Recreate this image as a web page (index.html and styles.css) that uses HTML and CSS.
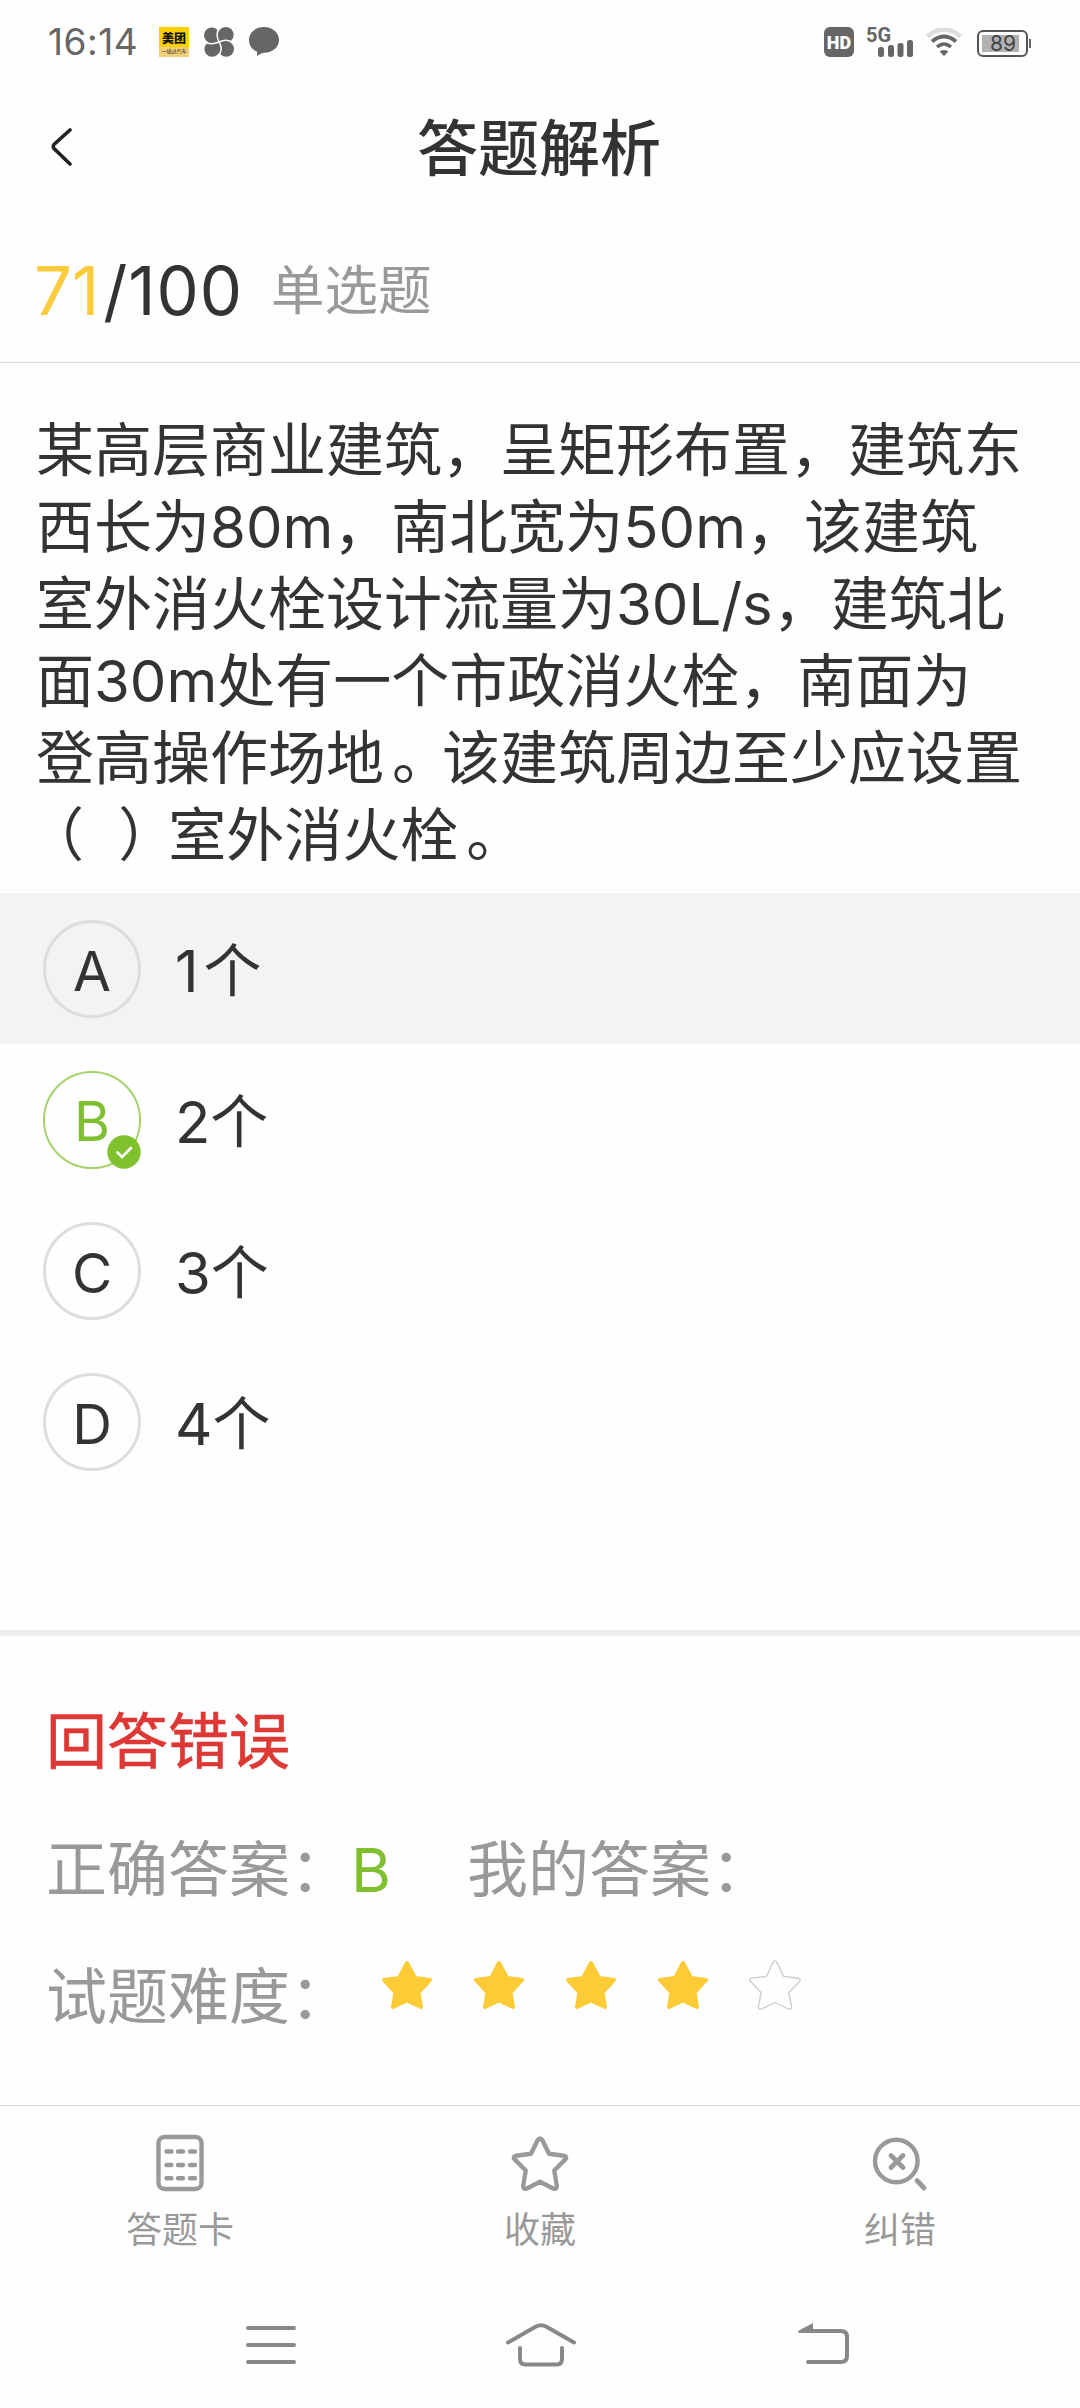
FILE: index.html
```html
<!DOCTYPE html>
<html lang="zh-CN">
<head>
    <meta charset="UTF-8">
    <meta name="viewport" content="width=device-width, initial-scale=1.0">
    <title>答题解析</title>
    <link rel="stylesheet" href="styles.css">
</head>
<body>
    <!-- 状态栏 -->
    <div class="status-bar">
        <span class="time">16:14</span>
        <div class="app-logo">
            <span class="app-name">美团</span>
            <span class="app-sub">一块过汽车</span>
        </div>
        <svg class="fan" width="30" height="30" viewBox="0 0 30 30">
            <g fill="#666">
                <circle cx="7.800" cy="8.200" r="7.800"/>
                <circle cx="21.800" cy="7.800" r="7.800"/>
                <circle cx="8.200" cy="22" r="7.800"/>
                <circle cx="22.200" cy="22" r="7.800"/>
                <circle cx="15" cy="15" r="5"/>
            </g>
            <path d="M16 0C12 5 13 11 15 15C18 19 18 25 14 30M0 14.500C5 18 10 17 15 15C20 12.500 25 12.500 30 16" fill="none" stroke="#fefefe" stroke-width="1.500"/>
        </svg>
        <svg class="chat" width="30" height="30" viewBox="0 0 30 30">
            <path d="M15 0C23.500 0 30 5.600 30 13S23.500 25.600 15.500 25.800C13 26 10.500 27 8 29V24.500C3 22.500 0 18.500 0 13C0 5.600 6.500 0 15 0Z" fill="#666"/>
        </svg>
        <div class="status-right">
            <span class="hd">HD</span>
            <div class="signal">
                <span class="net">5G</span>
                <svg width="36" height="17" viewBox="0 0 36 17" fill="#666">
                    <rect x="0" y="7" width="6" height="10" rx="2.500"/>
                    <rect x="10" y="5" width="6" height="12" rx="2.500"/>
                    <rect x="19.500" y="3" width="6" height="14" rx="2.500"/>
                    <rect x="29" y="0" width="6" height="17" rx="2.500"/>
                </svg>
            </div>
            <svg class="wifi" width="36" height="28" viewBox="0 0 36 28" fill="none">
                <path d="M1.500 8.500Q18-5.500 34.500 8.500" stroke="#ddd" stroke-width="4.500"/>
                <path d="M6 13.500Q18 3.500 30 13.500" stroke="#666" stroke-width="4"/>
                <path d="M11 19Q18 13 25 19" stroke="#666" stroke-width="3.500"/>
                <path d="M18 28L13.500 23.500Q18 20.500 22.500 23.500Z" fill="#666"/>
            </svg>
            <div class="battery"><span>89</span></div>
        </div>
    </div>

    <!-- 标题 -->
    <header class="header">
        <svg class="back" width="22" height="40" viewBox="0 0 22 40">
            <path d="M19 3L3 17.500Q1.500 19.500 3 21.500L19 37" fill="none" stroke="#222" stroke-width="3.600" stroke-linecap="round"/>
        </svg>
        <h1>答题解析</h1>
    </header>

    <div class="progress">
        <span class="current">71</span><span class="total">/100</span>
        <span class="type">单选题</span>
    </div>

    <!-- 题目 -->
    <p class="question">某高层商业建筑，呈矩形布置，建筑东<br>西长为80m，南北宽为50m，该建筑<br>室外消火栓设计流量为30L/s，建筑北<br>面30m处有一个市政消火栓，南面为<br>登高操作场地<span class="stop">。</span>该建筑周边至少应设置<br><span class="paren-l">（</span> <span class="paren-r">）</span>室外消火栓<span class="stop">。</span></p>

    <!-- 选项 -->
    <ul class="options">
        <li class="option active"><span class="letter">A</span><span class="text">1个</span></li>
        <li class="option right">
            <span class="letter">B
                <svg class="tick" width="34" height="34" viewBox="0 0 34 34">
                    <circle cx="17" cy="17" r="16.700" fill="#80c22e"/>
                    <path d="M10.500 17.500L15 22L24 13" fill="none" stroke="#fff" stroke-width="2.600" stroke-linecap="round" stroke-linejoin="round"/>
                </svg>
            </span>
            <span class="text">2个</span>
        </li>
        <li class="option"><span class="letter">C</span><span class="text">3个</span></li>
        <li class="option"><span class="letter">D</span><span class="text">4个</span></li>
    </ul>

    <!-- 答案结果 -->
    <section class="result">
        <div class="row wrong">回答错误</div>
        <div class="row">
            <span>正确答案：</span><span class="answer">B</span>
            <span class="mine">我的答案：</span>
        </div>
        <div class="row">
            <span>试题难度：</span>
            <div class="stars">
                <svg class="star" viewBox="0 0 52 50"><path d="M26 3L34 18L49 20L37.500 32.500L40 47L26 40.500L12 47L14.500 32.500L3 20L18 18Z"/></svg>
                <svg class="star" viewBox="0 0 52 50"><path d="M26 3L34 18L49 20L37.500 32.500L40 47L26 40.500L12 47L14.500 32.500L3 20L18 18Z"/></svg>
                <svg class="star" viewBox="0 0 52 50"><path d="M26 3L34 18L49 20L37.500 32.500L40 47L26 40.500L12 47L14.500 32.500L3 20L18 18Z"/></svg>
                <svg class="star" viewBox="0 0 52 50"><path d="M26 3L34 18L49 20L37.500 32.500L40 47L26 40.500L12 47L14.500 32.500L3 20L18 18Z"/></svg>
                <svg class="star empty" viewBox="0 0 52 50"><path d="M24 2.600Q26 -.6 28 2.600L34.500 16.300L48.500 18Q52.600 19 50.500 21.500L39.800 32.500L42.600 46.500Q42.600 50 39.500 49L26 42.500L12.500 49Q9.400 50 9.400 46.500L12.200 32.500L1.500 21.500Q-.6 19 3.500 18L17.500 16.300Z"/></svg>
            </div>
        </div>
    </section>

    <!-- 底部工具栏 -->
    <nav class="tabs">
        <div class="tab">
            <svg width="58" height="58" viewBox="0 0 58 58" fill="none" stroke="#999" stroke-width="4.400">
                <rect x="7.500" y="3" width="43" height="52" rx="6"/>
                <path d="M15.500 17.500H20.500M27 17.500H32M39 17.500H44M15.500 31H20.500M27 31H32M39 31H44M15.500 44.300H20.500M27 44.300H32M39 44.300H44" stroke-linecap="round"/>
            </svg>
            <span>答题卡</span>
        </div>
        <div class="tab">
            <svg width="58" height="58" viewBox="0 0 58 58" fill="none" stroke="#999" stroke-width="4.400" stroke-linejoin="round">
                <path d="M26.800 6Q29 2.800 31.200 6L38 19.800L53 21.800Q56.600 22.800 54.300 25.400L43.300 36.500L45.800 52Q45.500 56 42 54.500L29 47.800L16 54.500Q12.500 56 12.200 52L14.700 36.500L3.700 25.400Q1.400 22.800 5 21.800L20 19.800Z"/>
            </svg>
            <span>收藏</span>
        </div>
        <div class="tab">
            <svg width="58" height="58" viewBox="0 0 58 58" fill="none" stroke="#999" stroke-width="4.400" stroke-linecap="round">
                <circle cx="25.300" cy="27" r="21.300"/>
                <path d="M20 21.500L32 33.500M32 21.500L20 33.500M46 46.500L53 54" stroke-width="4.800"/>
            </svg>
            <span>纠错</span>
        </div>
    </nav>

    <!-- 系统导航 -->
    <div class="sys-nav">
        <svg width="50" height="44" viewBox="0 0 50 44" fill="none" stroke="#888" stroke-width="4" stroke-linecap="round">
            <path d="M2 5H48M2 22H48M2 39H48"/>
        </svg>
        <svg class="home" width="70" height="44" viewBox="0 0 70 44" fill="none" stroke="#888" stroke-width="4" stroke-linecap="round">
            <path d="M2 19.500L30 3.500Q35 .8 40 3.500L68 19.500M14 25V36Q14 41.500 19.500 41.500H50.500Q56 41.500 56 36V25"/>
        </svg>
        <svg width="52" height="44" viewBox="0 0 52 44" fill="none" stroke="#888" stroke-width="4" stroke-linecap="round">
            <path d="M10 8H43Q49 8 49 14V33Q49 39 43 39H10"/>
            <path d="M0 8L15 0V10H1.500Q0 10 0 8Z" fill="#888" stroke="none"/>
        </svg>
    </div>
</body>
</html>
```

FILE: styles.css
```css
* {
    box-sizing: border-box;
}
body {
    margin: 0;
    width: 1080px;
    height: 2408px;
    background-color: #fefefe;
    color: #333;
    font-family: Inter, "Noto Sans CJK SC", sans-serif;
    overflow: hidden;
}
svg {
    display: block;
    flex: none;
}

/* 状态栏 */
.status-bar {
    display: flex;
    align-items: center;
    height: 84px;
    padding: 0 48px;
    color: #666;
}
.time {
    width: 111px;
    font-size: 37px;
    line-height: 40px;
    letter-spacing: 0.5px;
    white-space: nowrap;
}
.app-logo {
    display: flex;
    flex-direction: column;
    align-items: center;
    width: 30px;
    height: 30px;
    margin-right: 15px;
    background: linear-gradient(#fdd000 0 67%, #f0cf78 67%);
    color: #111;
    overflow: hidden;
}
.app-name {
    margin-top: 5px;
    font-size: 12px;
    line-height: 14px;
    font-weight: 900;
}
.app-sub {
    font-size: 5px;
    line-height: 10px;
    white-space: nowrap;
}
.fan {
    margin-right: 15px;
}
.status-right {
    display: flex;
    align-items: center;
    margin-left: auto;
    margin-right: 1px;
}
.hd {
    width: 30px;
    height: 30px;
    margin-right: 12px;
    border-radius: 6px;
    background-color: #666;
    color: #fff;
    font-family: Roboto, sans-serif;
    font-size: 18px;
    line-height: 31px;
    font-weight: 900;
    text-align: center;
}
.signal {
    display: flex;
    flex-direction: column;
    width: 48px;
    height: 30px;
    margin-right: 12px;
}
.signal svg {
    margin: -1px 0 0 12px;
}
.net {
    font-family: Roboto, sans-serif;
    font-size: 20px;
    line-height: 16px;
    height: 14px;
    font-weight: 700;
}
.wifi {
    margin-right: 15px;
}
.battery {
    position: relative;
    width: 51px;
    height: 27px;
    margin: 3px 3px 0 0;
    padding: 3px;
    border: 2px solid #555;
    border-radius: 6px;
}
.battery span {
    display: block;
    width: 37px;
    height: 17px;
    padding-left: 8px;
    background-color: #b2b2b2;
    color: #444;
    font-size: 21px;
    line-height: 18px;
}
.battery::after {
    content: "";
    position: absolute;
    right: -5px;
    top: 7px;
    width: 2px;
    height: 9px;
    background-color: #666;
}

/* 标题 */
.header {
    display: flex;
    align-items: center;
    height: 126px;
    padding: 0 51px;
}
.header h1 {
    flex: 1;
    margin: 4px 24px 0 0;
    font-size: 61px;
    line-height: 80px;
    font-weight: 500;
    text-align: center;
}
.progress {
    display: flex;
    align-items: center;
    height: 153px;
    padding: 8px 34px 0;
    border-bottom: 1px solid #ddd;
    font-size: 67px;
}
.current {
    color: #fccb3c;
}
.total {
    margin-left: 4px;
    letter-spacing: 1px;
}
.type {
    margin-left: 28px;
    padding-bottom: 7px;
    color: #999;
    font-size: 53.5px;
}

/* 题目 */
.question {
    height: 530px;
    margin: 0;
    padding: 49px 0 0 36px;
    font-size: 58px;
    line-height: 77px;
    white-space: nowrap;
}
/* 标点居中 */
.stop {
    margin: 0 -8px 0 8px;
}
.paren-l {
    margin: 0 10px 0 -10px;
}
.paren-r {
    margin: 0 -8px 0 8px;
}

/* 选项 */
.options {
    height: 737px;
    margin: 0;
    padding: 0;
    list-style: none;
}
.option {
    display: flex;
    align-items: center;
    height: 151px;
    padding-left: 43px;
}
.option.active {
    background-color: #f3f3f3;
}
.option.active .text {
    letter-spacing: 5px;
}
.letter {
    position: relative;
    width: 98px;
    height: 98px;
    margin-right: 34px;
    border: 3px solid #ddd;
    border-radius: 50%;
    font-size: 55px;
    line-height: 96px;
    text-align: center;
}
.option.right .letter {
    border: 2px solid #a5d36c;
    color: #80c030;
}
.tick {
    position: absolute;
    right: -2px;
    bottom: -2px;
}
.text {
    padding-bottom: 3px;
    font-size: 58px;
}

/* 答案结果 */
.result {
    height: 475px;
    padding: 43px 0 0 46px;
    border-top: 6px solid #eee;
    color: #999;
    font-size: 61px;
}
.row {
    display: flex;
    align-items: center;
    height: 127.5px;
    line-height: 127px;
    white-space: nowrap;
}
.wrong {
    color: #de3835;
    -webkit-text-stroke: 0.6px #de3835;
}
.answer {
    width: 116px;
    color: #80c030;
}
.stars {
    display: flex;
    gap: 40px;
    margin: -26px 0 0 30px;
}
.star {
    width: 52px;
    height: 50px;
    fill: #fdcb35;
    stroke: #fdcb35;
    stroke-width: 4;
    stroke-linejoin: round;
}
.star.empty {
    fill: none;
    stroke: #ccc;
    stroke-width: 1.3;
}

/* 底部工具栏 */
.tabs {
    display: flex;
    height: 185px;
    padding-top: 28px;
    border-top: 1px solid #ddd;
}
.tab {
    display: flex;
    flex: 1;
    flex-direction: column;
    align-items: center;
    gap: 12px;
    color: #999;
    font-size: 36px;
    line-height: 52px;
}

/* 系统导航 */
.sys-nav {
    display: flex;
    padding: 33px 0 0 246px;
}
.home {
    margin: 0 222px 0 210px;
}
```
